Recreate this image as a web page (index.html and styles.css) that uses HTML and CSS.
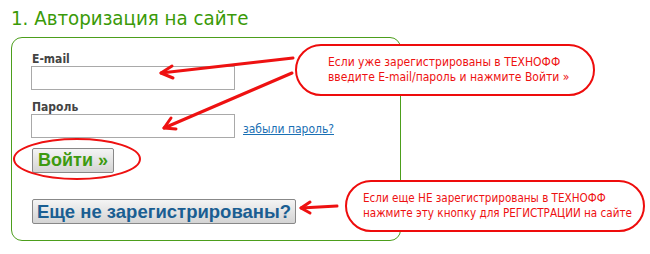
FILE: index.html
```html
<!DOCTYPE html>
<html lang="ru">
<head>
<meta charset="utf-8">
<title>Авторизация</title>
<link rel="stylesheet" href="styles.css">
</head>
<body>
<h1 class="title">1. Авторизация на сайте</h1>
<div class="panel">
  <div class="field">
    <label class="label">E-mail</label>
    <div class="row"><input class="input" type="text"></div>
  </div>
  <div class="field">
    <label class="label">Пароль</label>
    <div class="row"><input class="input" type="password"><a class="forgot" href="#">забыли пароль?</a></div>
  </div>
  <button class="btn btn-login">Войти »</button>
  <button class="btn btn-register">Еще не зарегистрированы?</button>
</div>
<div class="callout callout-login">Если уже зарегистрированы в ТЕХНОФФ<br>введите E-mail/пароль и нажмите Войти »</div>
<div class="callout callout-register">Если еще НЕ зарегистрированы в ТЕХНОФФ<br>нажмите эту кнопку для РЕГИСТРАЦИИ на сайте</div>
<svg class="annot" width="650" height="254" viewBox="0 0 650 254">
  <g fill="none" stroke="#ee1111" stroke-width="3" stroke-linecap="round" stroke-linejoin="round">
    <path d="M293 58 L161 73"/>
    <path d="M172 66 L161 73 L173 78"/>
    <path d="M292 73 L164 128"/>
    <path d="M171 118 L164 128 L176 129"/>
    <path d="M337 206 L301 208"/>
    <path d="M310 202 L301 208 L310 213"/>
    <ellipse cx="77" cy="159" rx="63" ry="20" stroke-width="2"/>
  </g>
</svg>
</body>
</html>
```
FILE: styles.css
```css
html, body {
  margin: 0;
  padding: 0;
  background: #ffffff;
}
body {
  position: relative;
  width: 650px;
  height: 254px;
  overflow: hidden;
  font-family: "DejaVu Sans Condensed", "DejaVu Sans", sans-serif;
}
.title {
  margin: 0;
  padding: 6px 0 0 11px;
  height: 31px;
  box-sizing: border-box;
  font-weight: normal;
  font-size: 20.3px;
  line-height: 24px;
  color: #3a9a08;
}
.panel {
  margin: 6px 0 0 11px;
  width: 390px;
  height: 204px;
  box-sizing: border-box;
  border: 1px solid #4c9e1c;
  border-radius: 11px;
  padding: 14px 0 0 19px;
  display: flex;
  flex-direction: column;
  align-items: flex-start;
}
.field {
  display: flex;
  flex-direction: column;
}
.field + .field {
  margin-top: 10px;
}
.label {
  display: block;
  padding-left: 1px;
  font-weight: bold;
  font-size: 12px;
  line-height: 14px;
  color: #444444;
}
.row {
  display: flex;
  align-items: flex-end;
}
.input {
  width: 204px;
  height: 24px;
  box-sizing: border-box;
  border: 1px solid #a9a9a9;
  margin: 0;
  padding: 0 4px;
  background: #ffffff;
}
.forgot {
  margin-left: 8px;
  margin-bottom: 2px;
  font-size: 12px;
  line-height: 14px;
  color: #1a70b4;
  text-decoration: underline;
}
.btn {
  margin: 10px 0 0 1px;
  height: 25px;
  box-sizing: border-box;
  border: 1px solid #888888;
  border-radius: 2px;
  background: linear-gradient(#f4f4f4, #d4d4d4);
  font-family: "Liberation Sans", Arial, sans-serif;
  font-weight: bold;
  padding: 0;
  white-space: nowrap;
  text-align: center;
  cursor: pointer;
}
.btn-login {
  width: 82px;
  font-size: 18px;
  color: #3d9a10;
}
.btn-register {
  margin-top: 26px;
  width: 264px;
  font-size: 18.5px;
  color: #1a5e92;
}
.callout {
  position: absolute;
  box-sizing: border-box;
  width: 300px;
  height: 52px;
  border: 2.5px solid #ee0c0c;
  border-radius: 26px;
  background: #ffffff;
  display: flex;
  align-items: center;
  font-size: 12px;
  line-height: 15px;
  white-space: nowrap;
  color: #ee1111;
}
.callout-login {
  left: 295px;
  top: 44px;
  padding-left: 31px;
}
.callout-register {
  left: 345px;
  top: 180px;
  padding-left: 16px;
  font-size: 11.6px;
}
.annot {
  position: absolute;
  left: 0;
  top: 0;
  pointer-events: none;
}
```
